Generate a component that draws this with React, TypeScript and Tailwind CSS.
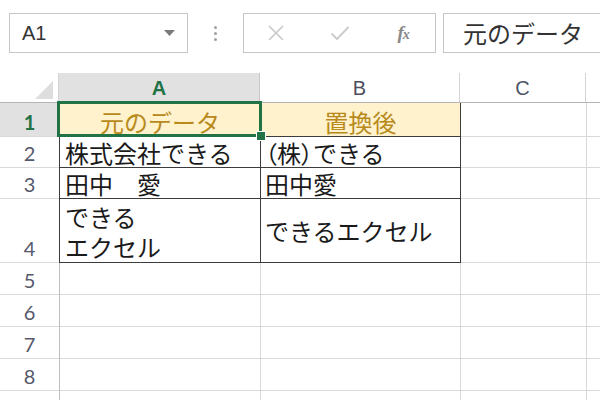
import React from 'react'

const gray = 'border-[#d9d9d9]'
const dark = 'border-[#3c3c3c]'

type Row = { n: number; h: number; sel?: boolean; a?: React.ReactNode; b?: React.ReactNode; table?: boolean; head?: boolean; bCenter?: boolean; hideNum?: boolean }

const rows: Row[] = [
  { n: 1, h: 34, sel: true, table: true, head: true, a: '元のデータ', b: '置換後' },
  { n: 2, h: 31, table: true, a: '株式会社できる', b: (<><span className="[font-feature-settings:'palt']">（</span>株<span className="[font-feature-settings:'palt']">）</span>できる</>) },
  { n: 3, h: 31, table: true, a: '田中　愛', b: '田中愛' },
  { n: 4, h: 64, table: true, a: (<div className="leading-[30px]">できる<br />エクセル</div>), b: 'できるエクセル', bCenter: true },
  { n: 5, h: 32 },
  { n: 6, h: 32 },
  { n: 7, h: 32 },
  { n: 8, h: 32 },
  { n: 9, h: 32, hideNum: true },
]

function Toolbar() {
  return (
    <div className="flex h-[73px] items-start pt-[13px] pl-[9px] gap-0">
      <div className="flex h-[40px] w-[179px] items-center justify-between border border-[#c6c6c6] pl-[12px] pr-[12px]">
        <span className="text-[20px] text-[#333] font-['Liberation_Sans',sans-serif]">A1</span>
        <svg width="11" height="7" viewBox="0 0 11 7"><path d="M0 0h11L5.5 6z" fill="#7a7a7a" /></svg>
      </div>
      <div className="flex w-[55px] h-[40px] flex-col items-center justify-center gap-[3px]">
        <div className="w-[3px] h-[3px] bg-[#a0a0a0] rounded-full" />
        <div className="w-[3px] h-[3px] bg-[#a0a0a0] rounded-full" />
        <div className="w-[3px] h-[3px] bg-[#a0a0a0] rounded-full" />
      </div>
      <div className="flex h-[40px] w-[193px] items-center border border-[#c6c6c6]">
        <div className="w-[64px] flex justify-center">
          <svg width="18" height="18" viewBox="0 0 18 18"><path d="M2 2l14 14M16 2L2 16" stroke="#c8c8c8" strokeWidth="1.6" /></svg>
        </div>
        <div className="w-[64px] flex justify-center">
          <svg width="20" height="16" viewBox="0 0 20 16"><path d="M1.5 8.5l5.5 5.5L18.5 2" stroke="#cdcdcd" strokeWidth="2" fill="none" /></svg>
        </div>
        <div className="w-[64px] flex justify-center">
          <span className="font-['Liberation_Serif',serif] italic font-bold text-[19px] text-[#8a8a8a] tracking-[-1px]">f<span className="text-[14px]">x</span></span>
        </div>
      </div>
      <div className="ml-[7px] flex h-[40px] flex-1 items-center border border-[#c6c6c6] border-r-0 pl-[19px]">
        <span className="text-[24px] text-[#333] font-['Noto_Sans_CJK_JP',sans-serif] leading-none">元のデータ</span>
      </div>
    </div>
  )
}

function HeaderRow() {
  return (
    <div className="flex h-[30px] border-b border-[#b5b5b5]">
      <div className="w-[59px] relative border-r border-[#d4d4d4]">
        <svg className="absolute right-[5px] bottom-[3px]" width="18" height="18" viewBox="0 0 18 18"><path d="M18 0v18H0z" fill="#dedede" /></svg>
      </div>
      <div className="w-[201px] bg-[#e1e1e1] border-r border-[#c8c8c8] flex items-center justify-center text-[20px] font-bold text-[#217346] font-['Liberation_Sans',sans-serif]">A</div>
      <div className="w-[200px] border-r border-[#d4d4d4] flex items-center justify-center text-[20px] text-[#4d4d5c] font-['Liberation_Sans',sans-serif]">B</div>
      <div className="w-[126px] border-r border-[#d4d4d4] flex items-center justify-center text-[20px] text-[#4d5566] font-['Liberation_Sans',sans-serif]">C</div>
      <div className="flex-1" />
    </div>
  )
}

function GridRow({ r }: { r: Row }) {
  const rowB = r.table ? dark : gray
  const headText = 'text-[#b88a1c] justify-center bg-[#fff2cc]'
  return (
    <div className="flex" style={{ height: r.h }}>
      <div className={`w-[59px] flex items-end justify-center border-b border-[#d9d9d9] text-[20px] leading-[28px] font-['Lato',sans-serif] ${r.sel ? 'bg-[#e1e1e1] text-[#217346] font-bold' : 'text-[#55586a]'}`}>
        {r.hideNum ? '' : r.n}
      </div>
      <div className={`w-[202px] flex border-l border-r border-b ${r.table ? dark : 'border-l-[#bdbdbd] border-r-[#d9d9d9] border-b-[#d9d9d9]'} ${r.head ? headText : 'pl-[5px]'} items-end`}>
        <span className="leading-[29px]">{r.a}</span>
      </div>
      <div className={`w-[200px] flex border-r border-b ${rowB} ${r.head ? headText + ' items-end' : r.bCenter ? 'items-center pl-[4px]' : 'items-end pl-[4px]'}`}>
        <span className="leading-[29px]">{r.b}</span>
      </div>
      <div className={`w-[126px] border-r border-b ${gray}`} />
      <div className={`flex-1 border-b ${gray}`} />
    </div>
  )
}

export default function App() {
  return (
    <div className="relative w-[600px] h-[400px] overflow-hidden bg-white text-[24px] text-[#1a1a1a] font-['Noto_Sans_CJK_JP',sans-serif]">
      <Toolbar />
      <HeaderRow />
      {rows.map((r) => (
        <GridRow key={r.n} r={r} />
      ))}
      {/* selection */}
      <div className="absolute left-[57px] top-[101px] w-[205px] h-[36px] border-[3px] border-[#217346]" />
      <div className="absolute left-[257px] top-[132px] w-[8px] h-[8px] bg-[#217346] outline outline-1 outline-white" />
    </div>
  )
}
